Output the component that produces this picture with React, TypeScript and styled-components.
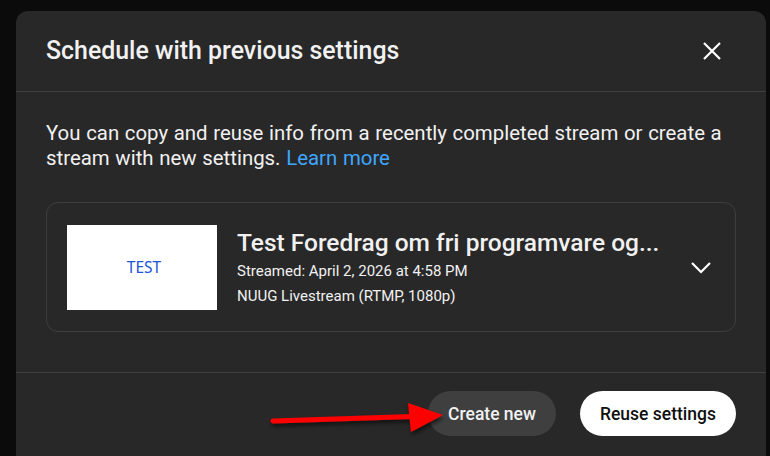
import styled, { createGlobalStyle } from 'styled-components';

const GlobalStyle = createGlobalStyle`
  html, body {
    margin: 0;
    padding: 0;
    background: #0b0b0b;
    overflow: hidden;
  }
  body {
    font-family: Roboto, "Noto Sans", Arial, sans-serif;
    color: #f1f1f1;
  }
`;

const Page = styled.div`
  width: 770px;
  height: 456px;
  padding: 11px 4px 0 16px;
  box-sizing: border-box;
`;

const Dialog = styled.div`
  position: relative;
  width: 750px;
  height: 460px;
  background: #282828;
  border-radius: 12px;
  display: flex;
  flex-direction: column;
`;

const Header = styled.div`
  height: 80px;
  display: flex;
  align-items: center;
  justify-content: space-between;
  padding: 0 34px 0 30px;
  border-bottom: 1px solid #3e3e3e;
`;

const Title = styled.h2`
  margin: 0;
  font-size: 24.9px;
  font-weight: 500;
  line-height: 30px;
`;

const IconButton = styled.button`
  width: 40px;
  height: 40px;
  display: flex;
  align-items: center;
  justify-content: center;
  background: none;
  border: none;
  padding: 0;
  color: #fff;
  cursor: pointer;
`;

const Body = styled.div`
  padding: 29px 30px 40px 30px;
  border-bottom: 1px solid #3e3e3e;
`;

const Intro = styled.p`
  margin: 0 0 31px 0;
  font-size: 20.4px;
  line-height: 25px;
  word-spacing: 0.6px;
`;

const Link = styled.a`
  color: #3ea6ff;
  text-decoration: none;
`;

const Card = styled.div`
  display: flex;
  align-items: center;
  gap: 20px;
  height: 130px;
  box-sizing: border-box;
  padding: 0 22px 0 20px;
  border: 1px solid #3e3e3e;
  border-radius: 12px;
`;

const Thumb = styled.div`
  flex: none;
  width: 150px;
  height: 85px;
  box-sizing: border-box;
  padding-left: 4px;
  background: #fff;
  display: flex;
  align-items: center;
  justify-content: center;
  font-family: "Noto Sans", sans-serif;
  font-size: 15.5px;
  color: #2153d6;
`;

const Info = styled.div`
  flex: 1;
  min-width: 0;
  display: flex;
  flex-direction: column;
  margin-top: 1px;
`;

const StreamTitle = styled.div`
  font-size: 24.5px;
  font-weight: 500;
  line-height: 32px;
  white-space: nowrap;
  overflow: hidden;
  text-overflow: ellipsis;
`;

const Meta = styled.div`
  font-size: 15px;
  line-height: 25px;
  color: #f1f1f1;
`;

const Footer = styled.div`
  position: relative;
  display: flex;
  justify-content: flex-end;
  gap: 24px;
  padding: 18px 30px 0 0;
`;

const PillButton = styled.button<{ $primary?: boolean }>`
  height: 45px;
  padding: 0 20px;
  border: none;
  border-radius: 23px;
  font-family: Roboto, sans-serif;
  font-size: 17.5px;
  font-weight: 500;
  background: ${(p) => (p.$primary ? '#ffffff' : '#3f3f3f')};
  color: ${(p) => (p.$primary ? '#0f0f0f' : '#f1f1f1')};
  cursor: pointer;
`;

const Arrow = styled.svg`
  position: absolute;
  left: 250px;
  top: 38px;
  overflow: visible;
`;

export default function App() {
  return (
    <>
      <GlobalStyle />
      <Page>
        <Dialog>
          <Header>
            <Title>Schedule with previous settings</Title>
            <IconButton aria-label="Close">
              <svg width="24" height="24" viewBox="0 0 24 24">
                <path d="M4 4 L20 20 M20 4 L4 20" stroke="#fff" strokeWidth="2.2" fill="none" />
              </svg>
            </IconButton>
          </Header>
          <Body>
            <Intro>
              You can copy and reuse info from a recently completed stream or create a stream with new
              settings. <Link href="#">Learn more</Link>
            </Intro>
            <Card>
              <Thumb>TEST</Thumb>
              <Info>
                <StreamTitle>Test Foredrag om fri programvare og...</StreamTitle>
                <Meta>Streamed: April 2, 2026 at 4:58 PM</Meta>
                <Meta>NUUG Livestream (RTMP, 1080p)</Meta>
              </Info>
              <svg width="24" height="24" viewBox="0 0 24 24">
                <path d="M3 8 L12 17 L21 8" stroke="#fff" strokeWidth="2.2" fill="none" />
              </svg>
            </Card>
          </Body>
          <Footer>
            <Arrow width="180" height="40" viewBox="0 0 180 40">
              <defs>
                <filter id="sh" x="-20%" y="-50%" width="140%" height="200%">
                  <feDropShadow dx="1" dy="3" stdDeviation="2" floodColor="#000" floodOpacity="0.6" />
                </filter>
              </defs>
              <g filter="url(#sh)">
                <path d="M7 10 L146 5.5" stroke="#ff0000" strokeWidth="5" strokeLinecap="round" fill="none" />
                <path d="M142 -8 L177 4 L145 21 Z" fill="#ff0000" />
              </g>
            </Arrow>
            <PillButton>Create new</PillButton>
            <PillButton $primary>Reuse settings</PillButton>
          </Footer>
        </Dialog>
      </Page>
    </>
  );
}
